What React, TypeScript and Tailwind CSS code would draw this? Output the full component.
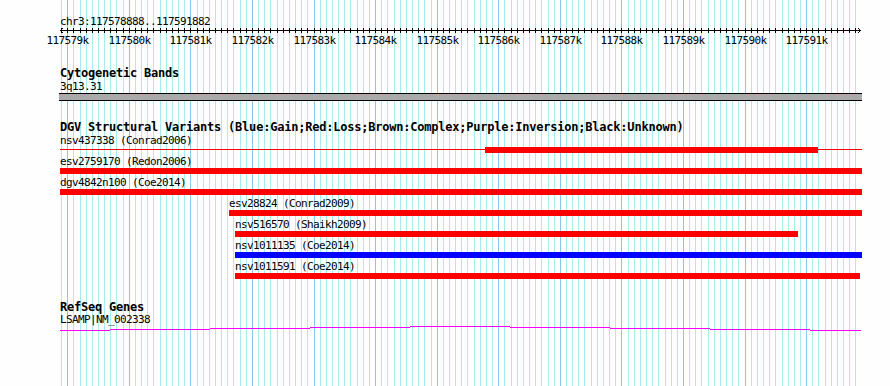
import React from "react"

const START = 117578888
const END = 117591882
const SCALE = 0.06158
const LEFT = 60
const RIGHT = 862

const toX = (bp: number) => Math.round(60.3 + (bp - START) * SCALE)
const clampX = (x: number) => Math.min(RIGHT, Math.max(LEFT, x))

type Variant = {
  name: string
  study: string
  start: number
  end: number
  color: string
  thickStart?: number
  thickEnd?: number
}

const variants: Variant[] = [
  { name: "nsv437338", study: "Conrad2006", start: 117570000, end: 117600000, color: "bg-[#ff0000]", thickStart: 117585785, thickEnd: 117591192 },
  { name: "esv2759170", study: "Redon2006", start: 117500000, end: 117700000, color: "bg-[#ff0000]" },
  { name: "dgv4842n100", study: "Coe2014", start: 117500000, end: 117700000, color: "bg-[#ff0000]" },
  { name: "esv28824", study: "Conrad2009", start: 117581628, end: 117650000, color: "bg-[#ff0000]" },
  { name: "nsv516570", study: "Shaikh2009", start: 117581725, end: 117590868, color: "bg-[#ff0000]" },
  { name: "nsv1011135", study: "Coe2014", start: 117581725, end: 117650000, color: "bg-[#0000ff]" },
  { name: "nsv1011591", study: "Coe2014", start: 117581725, end: 117591882, color: "bg-[#ff0000]" },
]

// 100bp minor grid, every 1kb a darker line
const gridTicks = Array.from({ length: 130 }, (_, i) => 117578900 + i * 100)
const majorTicks = gridTicks.filter((bp) => bp % 1000 === 0)

// intron hat of the gene model, drawn as a stepped line
const geneBreaks = [60, 110, 210, 310, 410, 510, 610, 710, 810, 861]
const geneLevels = [4, 3, 2, 1, 0, 1, 2, 3, 4]

function Grid() {
  return (
    <svg className="absolute inset-0 pointer-events-none" width={890} height={386} shapeRendering="crispEdges">
      {gridTicks.map((bp) => (
        <rect
          key={bp}
          x={toX(bp)}
          y={0}
          width={1}
          height={386}
          fill={bp % 1000 === 0 ? "#88c8ee" : "#a8ecec"}
        />
      ))}
    </svg>
  )
}

function Ruler() {
  return (
    <svg className="block" width={890} height={6} shapeRendering="crispEdges">
      <rect x={LEFT} y={2} width={RIGHT - LEFT - 1} height={1} fill="#000" />
      {gridTicks.map((bp) => (
        <rect key={bp} x={toX(bp)} y={0} width={1} height={5} fill="#000" />
      ))}
      <path d="M60.5 2.5 L63.5 -0.5 M60.5 2.5 L63.5 5.5" stroke="#000" strokeWidth={1} fill="none" />
      <path d="M860.5 2.5 L857.5 -0.5 M860.5 2.5 L857.5 5.5" stroke="#000" strokeWidth={1} fill="none" />
    </svg>
  )
}

function TrackTitle({ children }: { children: React.ReactNode }) {
  return (
    <div className="h-[13px] leading-[13px] pl-[60px] text-[12px] font-bold tracking-[-0.22px] whitespace-nowrap">
      {children}
    </div>
  )
}

function Label({ left, children, className = "" }: { left: number; children: React.ReactNode; className?: string }) {
  return (
    <div className={`h-[13px] leading-[13px] whitespace-nowrap ${className}`} style={{ paddingLeft: left }}>
      {children}
    </div>
  )
}

function VariantRow({ v }: { v: Variant }) {
  const left = clampX(toX(v.start))
  const right = clampX(toX(v.end))
  const hasThick = v.thickStart !== undefined && v.thickEnd !== undefined
  const thickLeft = hasThick ? clampX(toX(v.thickStart!)) : left
  const thickRight = hasThick ? clampX(toX(v.thickEnd!)) : right

  return (
    <div className="mb-[2px]">
      <Label left={left}>
        {v.name} ({v.study})
      </Label>
      <div className="relative h-[6px]">
        {hasThick && (
          <div className={`absolute top-[2px] h-px ${v.color}`} style={{ left, width: right - left }} />
        )}
        <div className={`relative h-[6px] ${v.color}`} style={{ marginLeft: thickLeft, width: thickRight - thickLeft }} />
      </div>
    </div>
  )
}

export default function App() {
  return (
    <div className="relative w-[890px] h-[386px] overflow-hidden bg-[#fdfefd] text-black font-['DejaVu_Sans_Mono',monospace] text-[11px] tracking-[-0.62px]">
      <Grid />

      <div className="relative pt-[16px]">
        {/* Ruler */}
        <div className="h-[12px] leading-[12px] pl-[60px] whitespace-nowrap">
          chr3:{START}..{END}
        </div>
        <Ruler />
        <div className="relative h-[13px] leading-[13px]">
          {majorTicks.map((bp) => (
            <span key={bp} className="absolute top-0 -translate-x-1/2 whitespace-nowrap" style={{ left: toX(bp) + 0.5 }}>
              {bp / 1000}k
            </span>
          ))}
        </div>

        {/* Cytogenetic Bands */}
        <div className="mt-[20px]">
          <TrackTitle>Cytogenetic Bands</TrackTitle>
          <Label left={60}>3q13.31</Label>
          <div className="h-[8px] ml-[59px] w-[803px] border-y border-black bg-[#aaaaaa]" />
        </div>

        {/* DGV */}
        <div className="mt-[20px]">
          <TrackTitle>DGV Structural Variants (Blue:Gain;Red:Loss;Brown:Complex;Purple:Inversion;Black:Unknown)</TrackTitle>
          {variants.map((v) => (
            <VariantRow key={v.name} v={v} />
          ))}
        </div>

        {/* RefSeq */}
        <div className="mt-[22px]">
          <TrackTitle>RefSeq Genes</TrackTitle>
          <Label left={60} className="-mt-px">
            LSAMP|NM_002338
          </Label>
          <svg className="block" width={890} height={6} shapeRendering="crispEdges">
            {geneLevels.map((lvl, i) => (
              <rect
                key={i}
                x={geneBreaks[i]}
                y={lvl}
                width={geneBreaks[i + 1] - geneBreaks[i]}
                height={1}
                fill="#ff00ff"
              />
            ))}
          </svg>
        </div>
      </div>
    </div>
  )
}
